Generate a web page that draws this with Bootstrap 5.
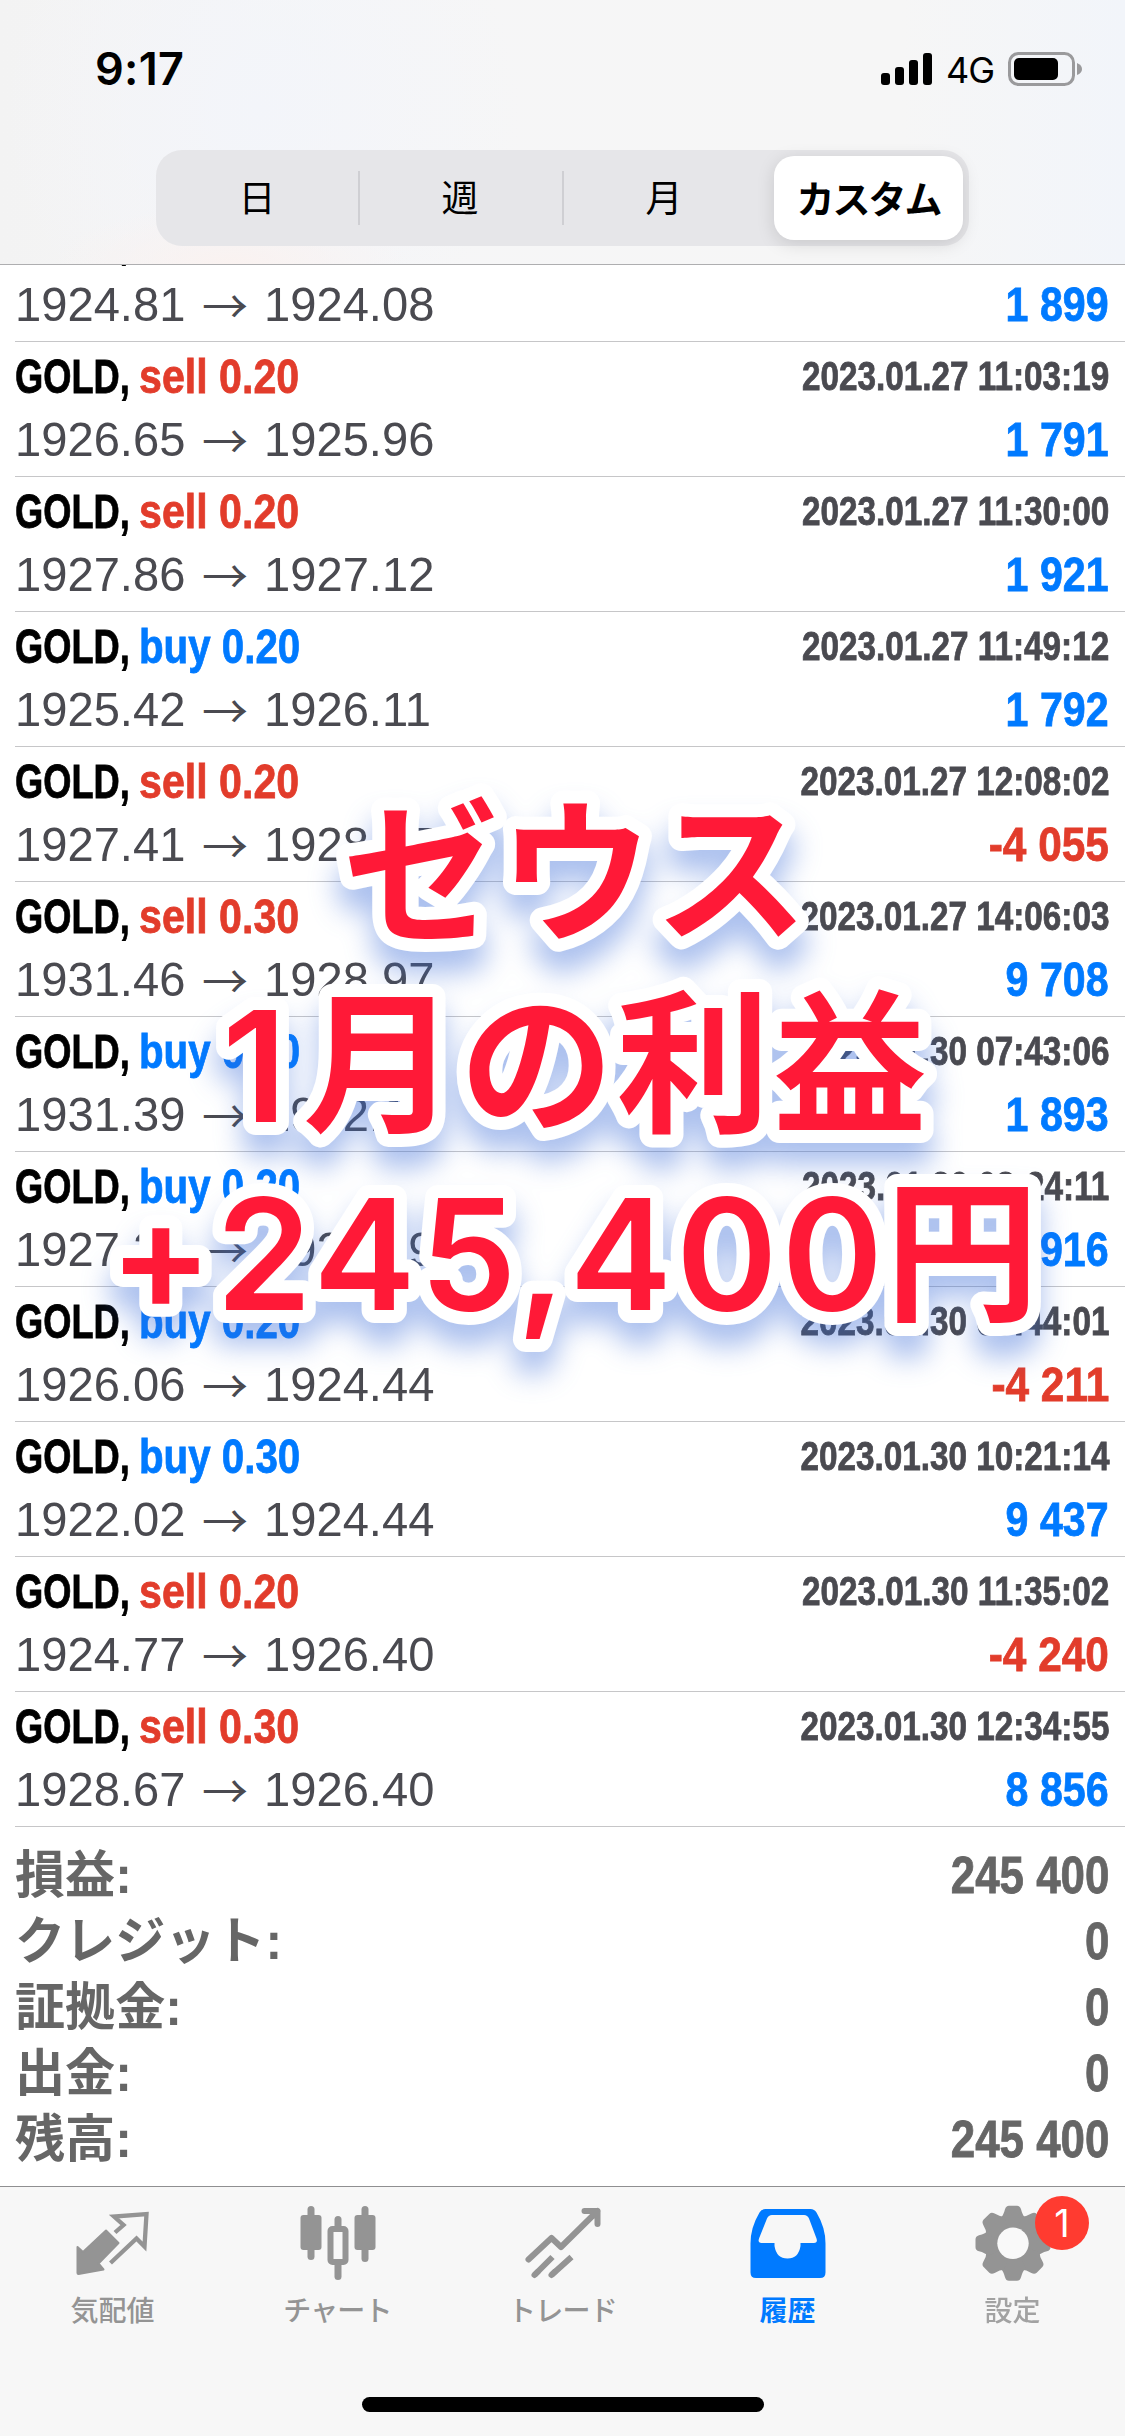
<!DOCTYPE html>
<html lang="ja">
<head>
<meta charset="utf-8">
<meta name="viewport" content="width=device-width, initial-scale=1">
<title>履歴</title>
<link href="https://cdn.jsdelivr.net/npm/bootstrap@5.3.0/dist/css/bootstrap.min.css" rel="stylesheet">
<style>
  body { background: #fff; font-family: "Liberation Sans", "Noto Sans CJK JP", sans-serif; color: #000; }
  .phone { width: 1125px; height: 2436px; }
  .topbar {
    height: 265px; border-bottom: 1px solid #aeaeb0; z-index: 1;
    background:
      radial-gradient(180px 60px at 230px 265px, #faf2f0, transparent),
      radial-gradient(260px 260px at 260px 110px, #f3f5fa, transparent),
      linear-gradient(90deg, #f3f3f3, #f6f6f7 30%, #f6f6f6 80%, #f2f5fa);
  }
  .status { height: 150px; padding: 48px 42px 0 95px; font-family: Inter, sans-serif; }
  .clock { font-size: 45px; font-weight: 600; line-height: 42px; letter-spacing: .3px; }
  .net { font-size: 36px; line-height: 44px; letter-spacing: -1px; margin: 0 14px 0 13px; }
  .segments { width: 813px; height: 96px; margin-left: 156px; border-radius: 26px; background: #e6e6e9; font-family: "Noto Sans CJK JP", sans-serif; font-size: 37px; line-height: 81px; padding: 6px 6px 6px 0; }
  .seg { width: 204px; text-align: center; position: relative; }
  .seg:first-child { width: 202px; }
  .seg + .seg:not(.on)::before { content: ""; position: absolute; left: 0; top: 15px; width: 2px; height: 54px; background: #cfcfd3; }
  .seg.on { width: 189px; margin-left: auto; background: #fff; border-radius: 20px; font-weight: 700; font-size: 38px; letter-spacing: -2px; box-shadow: 0 4px 18px rgba(0,0,0,.13); }
  .deals { margin-top: -58px; }
  .deal { height: 135px; margin-left: 15px; padding: 3px 16px 0 0; border-bottom: 1px solid #c6c6c8; font-size: 49px; line-height: 63px; }
  .sym, .kind, .gain, .when, .sum { font-weight: 700; white-space: nowrap; -webkit-text-stroke: .8px currentColor; }
  .sym { width: 123.5px; transform: scaleX(.74); transform-origin: 0 0; }
  .kind { transform: scaleX(.84); transform-origin: 0 0; }
  .kind.buy { transform: scaleX(.822); }
  .sell { color: #e23c2b; }
  .buy { color: #007aff; }
  .when { font-size: 40px; color: #4a4a50; transform: scaleX(.832); transform-origin: 100% 0; }
  .price { color: #4a4a50; }
  .price .num { width: 186px; transform: scaleX(.962); transform-origin: 0 0; }
  .price .arr { width: 62.5px; padding-left: 1px; font-family: "Noto Sans CJK JP", sans-serif; font-size: 46px; line-height: 61px; }
  .gain { transform: scaleX(.84); transform-origin: 100% 0; }
  .gain.sell { transform: scaleX(.865); }
  .totals { padding: 16px 16px 0 15px; height: 359px; font-size: 51px; line-height: 66px; color: #666; font-weight: 700; }
  .totals .lbl { transform: scaleX(.982); transform-origin: 0 0; }
  .sum { transform: scaleX(.86); transform-origin: 100% 0; }
  .tabs { height: 250px; background: #f7f7f7; border-top: 1px solid #8f8f91; color: #949494; }
  .tab { width: 225px; padding-top: 13px; font-size: 28px; line-height: 40px; font-weight: 500; font-family: "Noto Sans CJK JP", sans-serif; }
  .tab svg { width: 90px; height: 90px; margin-bottom: -1px; }
  .tab.on { color: #007aff; font-weight: 700; }
  .tab .kana { letter-spacing: -.8px; }
  .tab .faint { opacity: .85; }
  .count { width: 54px; height: 54px; left: 135px; top: 9px; background: #ff3b30; color: #fff; font: 400 38px/54px Inter, sans-serif; text-align: center; border-radius: 50%; }
  .homebar { width: 402px; height: 15px; margin: 68px auto 0; border-radius: 8px; background: #000; }
  .caption { left: 0; top: 740px; z-index: 2; filter: drop-shadow(0 22px 14px rgba(55,105,215,.42)); }
  .caption text { font-family: "Noto Sans CJK JP", sans-serif; font-weight: 700; font-size: 154px; fill: #ff1937; stroke: #fff; stroke-width: 26px; stroke-linejoin: round; paint-order: stroke; }
  .caption .lat { font-family: Inter, sans-serif; font-weight: 600; stroke-width: 26px; }
</style>
<script src="https://cdn.jsdelivr.net/npm/bootstrap@5.3.0/dist/js/bootstrap.bundle.min.js"></script>
</head>
<body>
<div class="phone position-relative overflow-hidden d-flex flex-column">
  <header class="topbar flex-shrink-0 position-relative">
    <div class="status d-flex justify-content-between align-items-start">
      <span class="clock">9:17</span>
      <div class="d-flex align-items-start">
        <svg width="52" height="40" viewBox="0 0 52 40"><rect x="0" y="25" width="9" height="12" rx="3"/><rect x="14" y="19" width="9" height="18" rx="3"/><rect x="28" y="12" width="9" height="25" rx="3"/><rect x="42" y="5" width="9" height="32" rx="3"/></svg>
        <span class="net">4G</span>
        <svg width="75" height="40" viewBox="0 0 75 40"><rect x="1.5" y="5.5" width="64" height="31" rx="9" fill="none" stroke="#9a9a9c" stroke-width="3"/><rect x="6" y="10" width="44" height="22" rx="5"/><path d="M69 15q5 2 5 6t-5 6z" fill="#9a9a9c"/></svg>
      </div>
    </div>
    <div class="segments d-flex">
      <div class="seg">日</div><div class="seg">週</div><div class="seg">月</div><div class="seg on">カスタム</div>
    </div>
  </header>

  <main class="flex-shrink-0">
    <div class="deals" id="deals"></div>
    <div class="totals">
      <div class="d-flex justify-content-between"><span class="lbl">損益:</span><span class="sum">245 400</span></div>
      <div class="d-flex justify-content-between"><span class="lbl">クレジット:</span><span class="sum">0</span></div>
      <div class="d-flex justify-content-between"><span class="lbl">証拠金:</span><span class="sum">0</span></div>
      <div class="d-flex justify-content-between"><span class="lbl">出金:</span><span class="sum">0</span></div>
      <div class="d-flex justify-content-between"><span class="lbl">残高:</span><span class="sum">245 400</span></div>
    </div>
  </main>

  <footer class="tabs flex-shrink-0">
    <nav class="d-flex">
      <div class="tab d-flex flex-column align-items-center">
        <svg viewBox="67.5 2200 90 90"><path d="M77 2247l5.500 5 23-21.500 12.500 12.500-20 20.500 5 6-25 4.500q-1 0-1-1z" fill="#949494" stroke="#949494" stroke-width="2" stroke-linejoin="round"/><path d="M114.500 2232.500l8.500-7.500-9.500-8.500 32.500-2.500-2 32.500-8-8L110 2263" fill="none" stroke="#949494" stroke-width="4.300"/></svg>
        <span>気配値</span>
      </div>
      <div class="tab d-flex flex-column align-items-center">
        <svg viewBox="292.5 2200 90 90" fill="#949494"><rect x="300" y="2215" width="21" height="35" rx="3"/><rect x="307" y="2206" width="7" height="54" rx="3.500"/><rect x="354" y="2215" width="21" height="35" rx="3"/><rect x="361" y="2206" width="7" height="56" rx="3.500"/><rect x="334" y="2216" width="7" height="64" rx="3.500"/><rect x="330" y="2229" width="15" height="33" rx="2" fill="#f7f7f7" stroke="#949494" stroke-width="6"/></svg>
        <span class="kana">チャート</span>
      </div>
      <div class="tab d-flex flex-column align-items-center">
        <svg viewBox="517.5 2200 90 90" fill="none" stroke="#949494" stroke-width="6" stroke-linecap="round" stroke-linejoin="round"><path d="M528 2259.500l23-21.500 9.500 9L597 2211M584 2211h13v13M534 2275l3-3M551 2275l3-3"/><path d="M534 2275l18-18M551 2275l20-18" stroke-linecap="butt"/></svg>
        <span class="kana">トレード</span>
      </div>
      <div class="tab on d-flex flex-column align-items-center">
        <svg viewBox="742.5 2200 90 90" fill="#007aff"><path fill-rule="evenodd" d="M765 2209h45q4 0 6 3.500 9 15 9 31v29q0 5.500-5.500 5.500h-64q-5.500 0-5.500-5.500v-29q0-16 9-31 2-3.500 6-3.500zM771.500 2215q-3.500 0-5 3.500l-8 20q-1.500 4.500 2.500 4.500h13v3q2 12.500 13 12.500t13-12.500v-3h13.500q4 0 2.500-4.500l-7.500-20q-1.500-3.500-5-3.500z"/></svg>
        <span>履歴</span>
      </div>
      <div class="tab d-flex flex-column align-items-center position-relative">
        <svg viewBox="-45 -43.300 90 90" fill="#949494"><defs><path id="tooth" d="M-12.500-25Q-9.500-28-8-34-7-37.500-4-37.500H4Q7-37.500 8-34 9.500-28 12.500-25L0 0z"/></defs><circle r="28.500"/><use href="#tooth"/><use href="#tooth" transform="rotate(45)"/><use href="#tooth" transform="rotate(90)"/><use href="#tooth" transform="rotate(135)"/><use href="#tooth" transform="rotate(180)"/><use href="#tooth" transform="rotate(225)"/><use href="#tooth" transform="rotate(270)"/><use href="#tooth" transform="rotate(315)"/><circle r="15.700" fill="#f9f9f9"/></svg>
        <span class="faint">設定</span>
        <span class="count position-absolute">1</span>
      </div>
    </nav>
    <div class="homebar"></div>
  </footer>

  <svg class="caption position-absolute" width="1125" height="660" viewBox="0 740 1125 660">
    <text x="344" y="930" textLength="464">ゼウス</text>
    <text class="lat" x="222" y="1122">1</text>
    <text x="303" y="1121" textLength="624">月の利益</text>
    <text class="lat" x="109" y="1310">+</text>
    <text class="lat" x="216" y="1310" textLength="667">245,400</text>
    <text x="885" y="1309">円</text>
  </svg>
</div>
<script>
  const deals = [
    ["", "", "", "1924.81", "1924.08", "1 899"],
    ["sell", "0.20", "2023.01.27 11:03:19", "1926.65", "1925.96", "1 791"],
    ["sell", "0.20", "2023.01.27 11:30:00", "1927.86", "1927.12", "1 921"],
    ["buy", "0.20", "2023.01.27 11:49:12", "1925.42", "1926.11", "1 792"],
    ["sell", "0.20", "2023.01.27 12:08:02", "1927.41", "1928.97", "-4 055"],
    ["sell", "0.30", "2023.01.27 14:06:03", "1931.46", "1928.97", "9 708"],
    ["buy", "0.20", "2023.01.30 07:43:06", "1931.39", "1932.12", "1 893"],
    ["buy", "0.20", "2023.01.30 08:24:11", "1927.25", "1927.99", "1 916"],
    ["buy", "0.20", "2023.01.30 09:44:01", "1926.06", "1924.44", "-4 211"],
    ["buy", "0.30", "2023.01.30 10:21:14", "1922.02", "1924.44", "9 437"],
    ["sell", "0.20", "2023.01.30 11:35:02", "1924.77", "1926.40", "-4 240"],
    ["sell", "0.30", "2023.01.30 12:34:55", "1928.67", "1926.40", "8 856"]
  ];
  document.getElementById("deals").innerHTML = deals.map(([side, lot, when, from, to, gain]) => `
    <div class="deal">
      <div class="d-flex justify-content-between">
        <div class="d-flex"><span class="sym">GOLD,</span><span class="kind ${side}">${side} ${lot}</span></div>
        <span class="when">${when}</span>
      </div>
      <div class="d-flex justify-content-between">
        <div class="price d-flex"><span class="num">${from}</span><span class="arr">→</span><span class="num">${to}</span></div>
        <span class="gain ${gain[0] === "-" ? "sell" : "buy"}">${gain}</span>
      </div>
    </div>`).join("");
</script>
</body>
</html>
